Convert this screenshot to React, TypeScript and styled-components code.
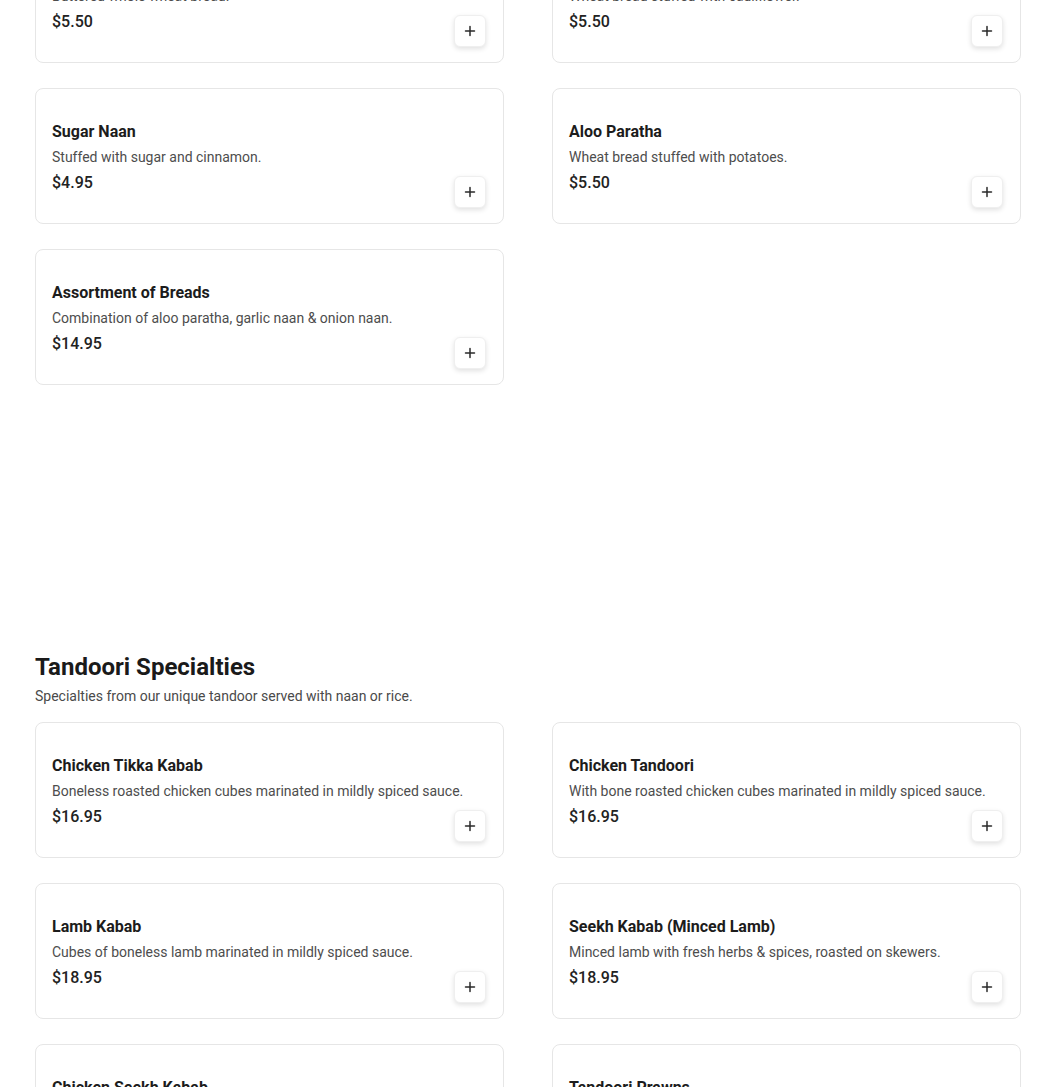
import React from "react";
import styled, { createGlobalStyle } from "styled-components";

const GlobalStyle = createGlobalStyle`
  html, body {
    margin: 0;
    padding: 0;
    background: #ffffff;
    font-family: Roboto, "Liberation Sans", sans-serif;
    color: #1c1c1c;
  }
  * { box-sizing: border-box; }
`;

const Page = styled.main`
  width: 986px;
  margin: -73px 0 0 35px;
`;

const Section = styled.section<{ $gap?: number }>`
  margin-bottom: ${(p) => p.$gap ?? 0}px;
`;

const SectionTitle = styled.h2`
  margin: 0;
  font-size: 24px;
  line-height: 32px;
  font-weight: 700;
  color: #1a1a1a;
`;

const SectionSub = styled.p`
  margin: 3px 0 16px;
  font-size: 14px;
  line-height: 20px;
  color: #4a4a4a;
`;

const Grid = styled.div`
  display: grid;
  grid-template-columns: 469px 469px;
  column-gap: 48px;
  row-gap: 25px;
`;

// info and button share one grid cell; the button sits in its bottom-right corner
const Card = styled.article`
  display: grid;
  grid-template-areas: "stack";
  min-height: 136px;
  padding: 16px 17px 15px 16px;
  border: 1px solid #e6e6e6;
  border-radius: 8px;
  background: #fff;
`;

const Info = styled.div`
  grid-area: stack;
  align-self: start;
  padding-top: 16px;
  display: flex;
  flex-direction: column;
`;

const Name = styled.h3`
  margin: 0;
  font-size: 16px;
  line-height: 22px;
  font-weight: 700;
  color: #1c1c1c;
`;

const Desc = styled.p`
  margin: 4px 0 0;
  font-size: 14px;
  line-height: 20px;
  color: #4d4d4d;
`;

const Price = styled.span`
  margin-top: 4px;
  font-size: 16px;
  line-height: 24px;
  font-weight: 500;
  color: #222;
`;

const AddButton = styled.button`
  grid-area: stack;
  align-self: end;
  justify-self: end;
  width: 32px;
  height: 32px;
  display: flex;
  align-items: center;
  justify-content: center;
  padding: 0;
  border: 1px solid #efefef;
  border-radius: 6px;
  background: #fff;
  box-shadow: 0 2px 5px rgba(0, 0, 0, 0.12);
  color: #2a2a2a;
  cursor: pointer;
`;

type Item = { name: string; desc: string; price: string };

const breads: Item[] = [
  { name: "Tandoori Roti", desc: "Buttered whole wheat bread.", price: "$5.50" },
  { name: "Gobi Paratha", desc: "Wheat bread stuffed with cauliflower.", price: "$5.50" },
  { name: "Sugar Naan", desc: "Stuffed with sugar and cinnamon.", price: "$4.95" },
  { name: "Aloo Paratha", desc: "Wheat bread stuffed with potatoes.", price: "$5.50" },
  {
    name: "Assortment of Breads",
    desc: "Combination of aloo paratha, garlic naan & onion naan.",
    price: "$14.95",
  },
];

const tandoori: Item[] = [
  {
    name: "Chicken Tikka Kabab",
    desc: "Boneless roasted chicken cubes marinated in mildly spiced sauce.",
    price: "$16.95",
  },
  {
    name: "Chicken Tandoori",
    desc: "With bone roasted chicken cubes marinated in mildly spiced sauce.",
    price: "$16.95",
  },
  { name: "Lamb Kabab", desc: "Cubes of boneless lamb marinated in mildly spiced sauce.", price: "$18.95" },
  {
    name: "Seekh Kabab (Minced Lamb)",
    desc: "Minced lamb with fresh herbs & spices, roasted on skewers.",
    price: "$18.95",
  },
  { name: "Chicken Seekh Kabab", desc: "Minced chicken with fresh herbs & spices.", price: "$16.95" },
  { name: "Tandoori Prawns", desc: "Jumbo prawns marinated in spices and roasted.", price: "$21.95" },
];

const PlusIcon = () => (
  <svg width="12" height="12" viewBox="0 0 12 12" fill="none">
    <path d="M6 1.5v9M1.5 6h9" stroke="currentColor" strokeWidth="1.5" strokeLinecap="round" />
  </svg>
);

const MenuCard = ({ item }: { item: Item }) => (
  <Card>
    <Info>
      <Name>{item.name}</Name>
      <Desc>{item.desc}</Desc>
      <Price>{item.price}</Price>
    </Info>
    <AddButton aria-label={`Add ${item.name}`}>
      <PlusIcon />
    </AddButton>
  </Card>
);

export default function App() {
  return (
    <>
      <GlobalStyle />
      <Page>
        <Section $gap={266}>
          <Grid>
            {breads.map((it) => (
              <MenuCard key={it.name} item={it} />
            ))}
          </Grid>
        </Section>
        <Section>
          <SectionTitle>Tandoori Specialties</SectionTitle>
          <SectionSub>Specialties from our unique tandoor served with naan or rice.</SectionSub>
          <Grid>
            {tandoori.map((it) => (
              <MenuCard key={it.name} item={it} />
            ))}
          </Grid>
        </Section>
      </Page>
    </>
  );
}
